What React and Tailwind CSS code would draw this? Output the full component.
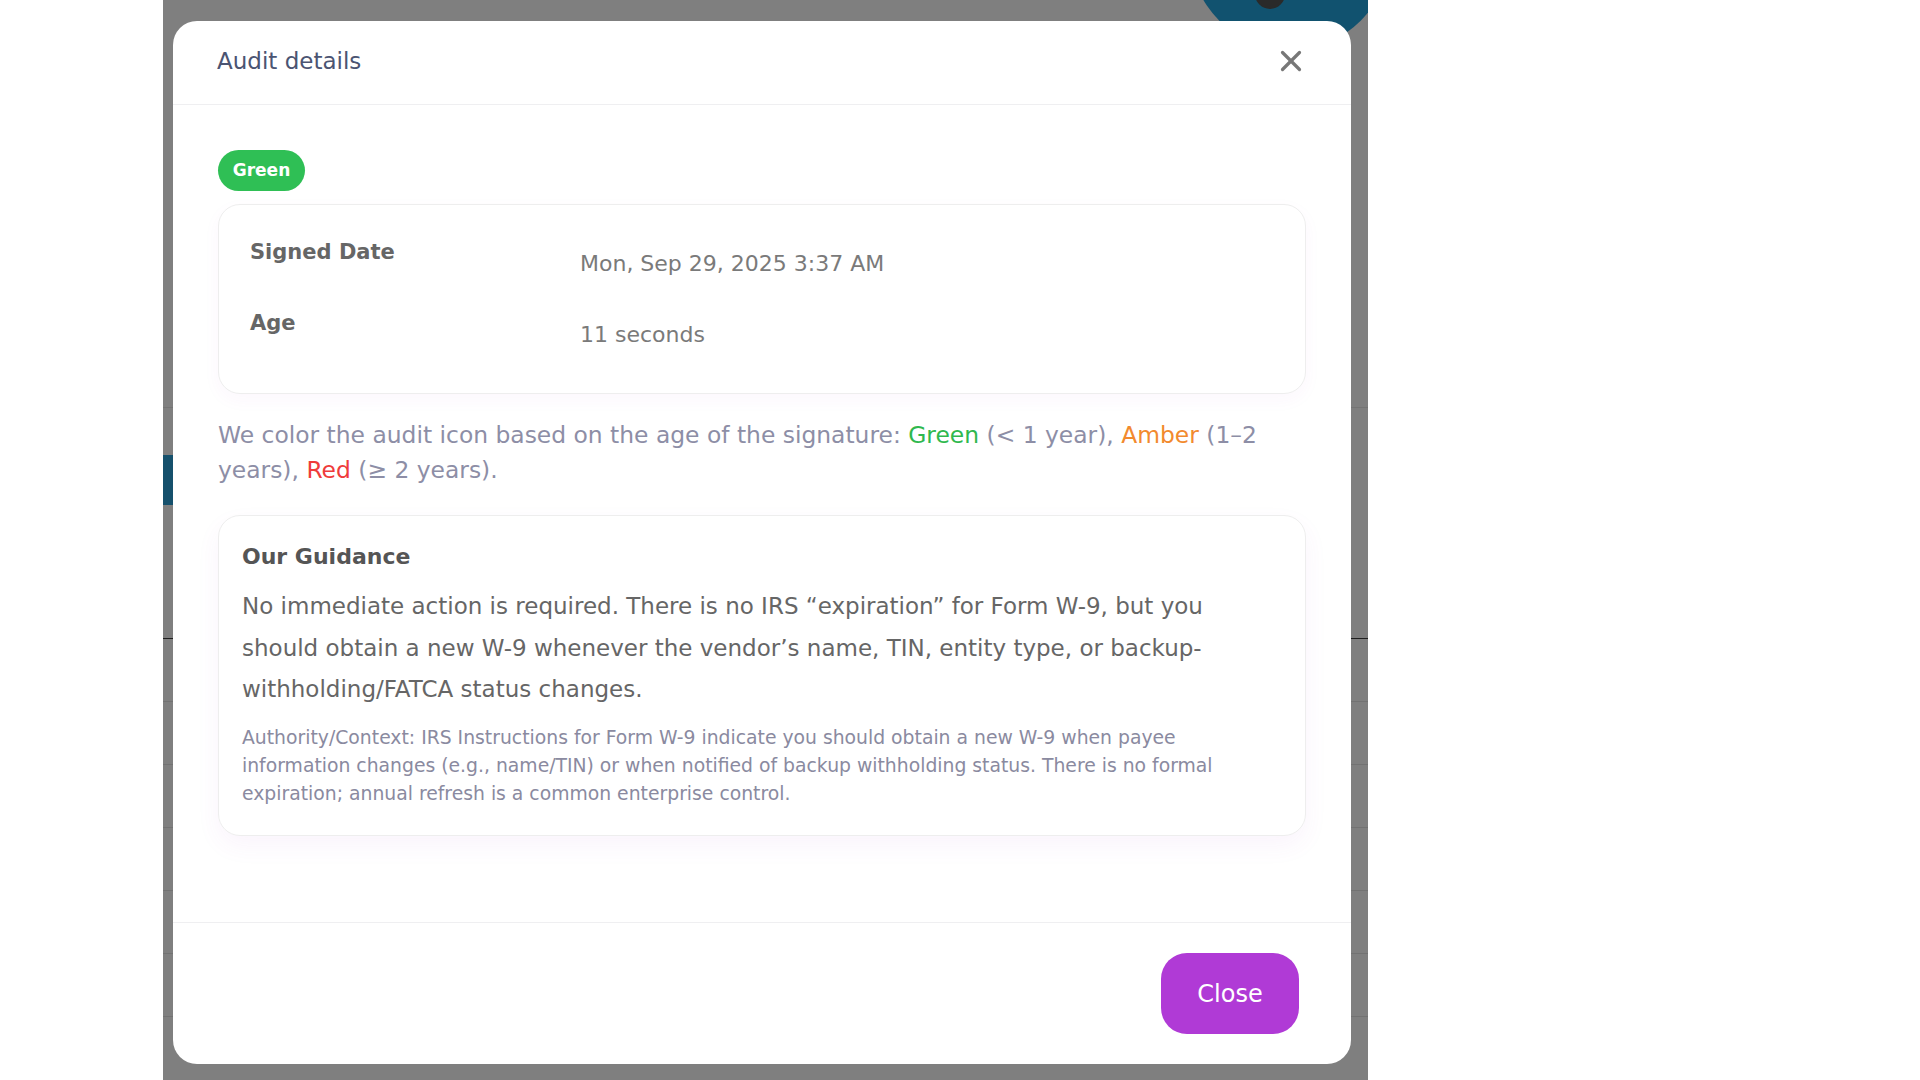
import React from 'react';
import { X } from 'lucide-react';

const font = { fontFamily: '"DejaVu Sans", "Noto Sans", sans-serif' };

function InfoRow({ label, value }) {
  return (
    <>
      <div className="text-[21px] font-bold leading-[30px] text-[#666666]">{label}</div>
      <div className="mt-[12px] text-[22px] leading-[30px] text-[#7a7a7a]">{value}</div>
    </>
  );
}

function Backdrop() {
  return (
    <div className="absolute left-[163px] top-0 flex h-full w-[1205px] flex-col overflow-hidden bg-[#7f7f7f]">
      <div className="h-[408px] shrink-0 border-b border-[#747474]" />
      <div className="h-[231px] shrink-0 border-b border-[#1f1f1f]" />
      {[0, 1, 2, 3, 4, 5].map((i) => (
        <div key={i} className="h-[63px] shrink-0 border-b border-[#727272]" />
      ))}
      <div className="absolute left-0 top-[455px] h-[50px] w-[120px] rounded-r bg-[#15506c]" />
      <div className="absolute left-[1027px] top-[-150px] h-[200px] w-[200px] rounded-full bg-[#11526f]" />
      <div className="absolute left-[1092px] top-[-21px] h-[30px] w-[30px] rounded-full bg-[#2a2a2a]" />
    </div>
  );
}

export default function App() {
  return (
    <div className="relative h-[1080px] w-[1920px] overflow-hidden bg-white" style={font}>
      <Backdrop />

      <div className="absolute left-[173px] top-[21px] flex h-[1043px] w-[1178px] flex-col rounded-[24px] bg-white">
        <div className="flex h-[84px] shrink-0 items-center justify-between border-b border-[#efeff1] pb-[3px] pl-[44px] pr-[43px]">
          <h2 className="text-[23px] font-normal text-[#4b5472]">Audit details</h2>
          <button className="text-[#777777]" aria-label="Close">
            <X className="h-[34px] w-[34px]" strokeWidth={2.3} />
          </button>
        </div>

        <div className="flex-1 px-[45px] pt-[45px]">
          <span className="inline-flex h-[41px] w-[87px] items-center justify-center rounded-full bg-[#2fbf55] text-[17px] font-bold text-white">
            Green
          </span>

          <div className="mt-[13px] grid grid-cols-[330px_1fr] gap-y-[29px] rounded-[22px] border border-[#eeeeee] px-[31px] pb-[43px] pt-[32px] shadow-[0_6px_18px_rgba(170,60,210,0.04)]">
            <InfoRow label="Signed Date" value="Mon, Sep 29, 2025 3:37 AM" />
            <InfoRow label="Age" value="11 seconds" />
          </div>

          <p className="mt-[24px] text-[23.4px] leading-[35px] text-[#8d8ea6]">
            We color the audit icon based on the age of the signature:{' '}
            <span className="text-[#2fb84e]">Green</span> (&lt; 1 year),{' '}
            <span className="text-[#f28a2e]">Amber</span> (1–2 years),{' '}
            <span className="text-[#ef3b3b]">Red</span> (≥ 2 years).
          </p>

          <div className="mt-[27px] rounded-[22px] border border-[#eeeeee] px-[23px] pb-[27px] pt-[26px] shadow-[0_10px_24px_rgba(170,60,210,0.06)]">
            <h3 className="text-[22px] font-bold leading-[30px] text-[#555555]">Our Guidance</h3>
            <p className="mt-[14px] pr-[40px] text-[23px] leading-[41.5px] text-[#666666]">
              No immediate action is required. There is no IRS “expiration” for Form W-9, but you should obtain a new W-9 whenever the vendor’s name, TIN, entity type, or backup-withholding/FATCA status changes.
            </p>
            <p className="mt-[13px] pr-[40px] text-[18.8px] leading-[28px] text-[#8a8aa0]">
              Authority/Context: IRS Instructions for Form W-9 indicate you should obtain a new W-9 when payee information changes (e.g., name/TIN) or when notified of backup withholding status. There is no formal expiration; annual refresh is a common enterprise control.
            </p>
          </div>
        </div>

        <div className="flex h-[142px] shrink-0 items-center justify-end border-t border-[#efeff1] pr-[52px]">
          <button className="h-[81px] w-[138px] rounded-[26px] bg-[#b03ad6] text-[24px] text-white">Close</button>
        </div>
      </div>
    </div>
  );
}
